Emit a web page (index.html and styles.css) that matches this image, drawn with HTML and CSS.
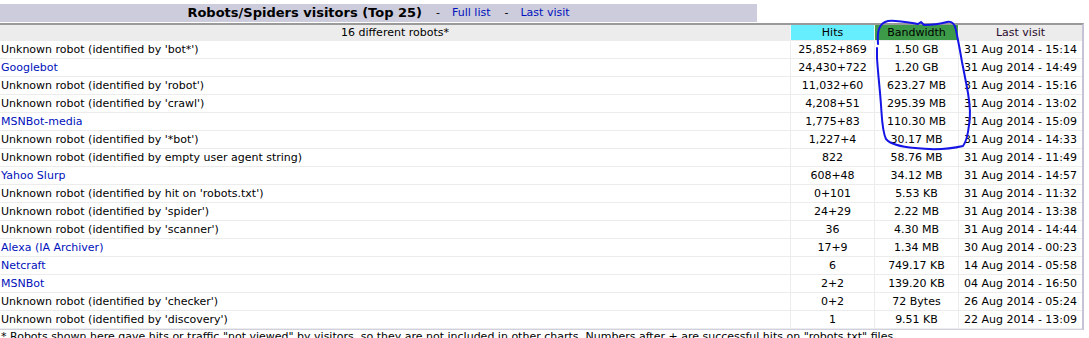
FILE: index.html
```html
<!DOCTYPE html>
<html>
<head>
<meta charset="utf-8">
<title>Robots/Spiders visitors</title>
<link rel="stylesheet" href="styles.css">
</head>
<body>
<div class="stats">
  <div class="titlebar">
    <div class="title">
      <span class="title-main">Robots/Spiders visitors (Top 25)</span>
      <span class="sep">-</span>
      <a href="#" class="tlink">Full list</a>
      <span class="sep">-</span>
      <a href="#" class="tlink">Last visit</a>
    </div>
  </div>
  <div class="data">
    <div class="row head">
      <div class="cell name-h">16 different robots*</div>
      <div class="cell hits-h">Hits</div>
      <div class="cell bw-h">Bandwidth</div>
      <div class="cell lv-h">Last visit</div>
    </div>
    <div class="row"><div class="cell name">Unknown robot (identified by 'bot*')</div><div class="cell">25,852+869</div><div class="cell">1.50 GB</div><div class="cell">31 Aug 2014 - 15:14</div></div>
    <div class="row"><div class="cell name"><a href="#">Googlebot</a></div><div class="cell">24,430+722</div><div class="cell">1.20 GB</div><div class="cell">31 Aug 2014 - 14:49</div></div>
    <div class="row"><div class="cell name">Unknown robot (identified by 'robot')</div><div class="cell">11,032+60</div><div class="cell">623.27 MB</div><div class="cell">31 Aug 2014 - 15:16</div></div>
    <div class="row"><div class="cell name">Unknown robot (identified by 'crawl')</div><div class="cell">4,208+51</div><div class="cell">295.39 MB</div><div class="cell">31 Aug 2014 - 13:02</div></div>
    <div class="row"><div class="cell name"><a href="#">MSNBot-media</a></div><div class="cell">1,775+83</div><div class="cell">110.30 MB</div><div class="cell">31 Aug 2014 - 15:09</div></div>
    <div class="row"><div class="cell name">Unknown robot (identified by '*bot')</div><div class="cell">1,227+4</div><div class="cell">30.17 MB</div><div class="cell">31 Aug 2014 - 14:33</div></div>
    <div class="row"><div class="cell name">Unknown robot (identified by empty user agent string)</div><div class="cell">822</div><div class="cell">58.76 MB</div><div class="cell">31 Aug 2014 - 11:49</div></div>
    <div class="row"><div class="cell name"><a href="#">Yahoo Slurp</a></div><div class="cell">608+48</div><div class="cell">34.12 MB</div><div class="cell">31 Aug 2014 - 14:57</div></div>
    <div class="row"><div class="cell name">Unknown robot (identified by hit on 'robots.txt')</div><div class="cell">0+101</div><div class="cell">5.53 KB</div><div class="cell">31 Aug 2014 - 11:32</div></div>
    <div class="row"><div class="cell name">Unknown robot (identified by 'spider')</div><div class="cell">24+29</div><div class="cell">2.22 MB</div><div class="cell">31 Aug 2014 - 13:38</div></div>
    <div class="row"><div class="cell name">Unknown robot (identified by 'scanner')</div><div class="cell">36</div><div class="cell">4.30 MB</div><div class="cell">31 Aug 2014 - 14:44</div></div>
    <div class="row"><div class="cell name"><a href="#">Alexa (IA Archiver)</a></div><div class="cell">17+9</div><div class="cell">1.34 MB</div><div class="cell">30 Aug 2014 - 00:23</div></div>
    <div class="row"><div class="cell name"><a href="#">Netcraft</a></div><div class="cell">6</div><div class="cell">749.17 KB</div><div class="cell">14 Aug 2014 - 05:58</div></div>
    <div class="row"><div class="cell name"><a href="#">MSNBot</a></div><div class="cell">2+2</div><div class="cell">139.20 KB</div><div class="cell">04 Aug 2014 - 16:50</div></div>
    <div class="row"><div class="cell name">Unknown robot (identified by 'checker')</div><div class="cell">0+2</div><div class="cell">72 Bytes</div><div class="cell">26 Aug 2014 - 05:24</div></div>
    <div class="row"><div class="cell name">Unknown robot (identified by 'discovery')</div><div class="cell">1</div><div class="cell">9.51 KB</div><div class="cell">22 Aug 2014 - 13:09</div></div>
  </div>
  <p class="note">* Robots shown here gave hits or traffic "not viewed" by visitors, so they are not included in other charts. Numbers after + are successful hits on "robots.txt" files.</p>
</div>
<svg class="ink" width="1089" height="338" viewBox="0 0 1089 338" xmlns="http://www.w3.org/2000/svg">
  <path d="M 878 44 C 877 31, 879 23, 888 21 C 896 20, 906 22, 918 24 L 921 22 L 924 25 C 932 25, 940 24, 947 22 C 952 21, 955 24, 956 30 C 958 40, 960 50, 962 62 C 964 72, 966 82, 968 93 C 970 105, 971 115, 969 125 C 968 134, 967 141, 963 146 C 950 149, 932 150, 915 148 C 902 147, 891 145, 886 139 C 882 131, 882 118, 881 105 C 880 90, 878 74, 877 58 L 877 48" fill="none" stroke="#1515e6" stroke-width="2" stroke-linecap="round" stroke-linejoin="round"/>
</svg>
</body>
</html>
```

FILE: styles.css
```css
html, body {
  margin: 0;
  padding: 0;
  background: #ffffff;
}

body {
  font-family: "DejaVu Sans", Verdana, sans-serif;
  font-size: 11px;
  color: #000000;
  position: relative;
  width: 1089px;
  height: 338px;
  overflow: hidden;
}

a {
  color: #0011bb;
  text-decoration: none;
}

.stats {
  width: 1084px;
}

.titlebar {
  display: flex;
  padding-top: 4px;
}

.title {
  width: 757px;
  height: 18px;
  background: #ccccdd;
  display: flex;
  align-items: center;
  justify-content: center;
}

.title-main {
  font-weight: bold;
  font-size: 13px;
  line-height: 18px;
}

.sep {
  padding: 0 12px 0 14px;
  line-height: 18px;
}

.tlink {
  line-height: 18px;
}

.data {
  margin-top: 1px;
  border-top: 2px solid #9a9a9a;
  border-right: 2px solid #c4c4d6;
  border-bottom: 1px solid #d0d0e0;
  width: 1082px;
}

.row {
  display: grid;
  grid-template-columns: 791px 84px 84px 123px;
  height: 18px;
}

.cell {
  box-sizing: border-box;
  border-right: 1px solid #ececec;
  border-bottom: 1px solid #ececec;
  text-align: center;
  line-height: 17px;
  white-space: nowrap;
  overflow: hidden;
}

.row .cell:last-child {
  border-right: none;
}

.name {
  text-align: left;
  padding-left: 1px;
}

.head {
  height: 16px;
}

.head .cell {
  line-height: 15px;
  background: #ececec;
  border-right-color: #f4f4f4;
  border-bottom: 1px solid #ececec;
}

.head .hits-h {
  background: #66eeff;
}

.head .bw-h {
  background: #3c9a48;
}

.head .lv-h {
  color: #2a0a2a;
}

.note {
  margin: 0;
  padding-left: 1px;
  line-height: 13px;
  white-space: nowrap;
}

.ink {
  position: absolute;
  top: 0;
  left: 0;
  pointer-events: none;
}
```
